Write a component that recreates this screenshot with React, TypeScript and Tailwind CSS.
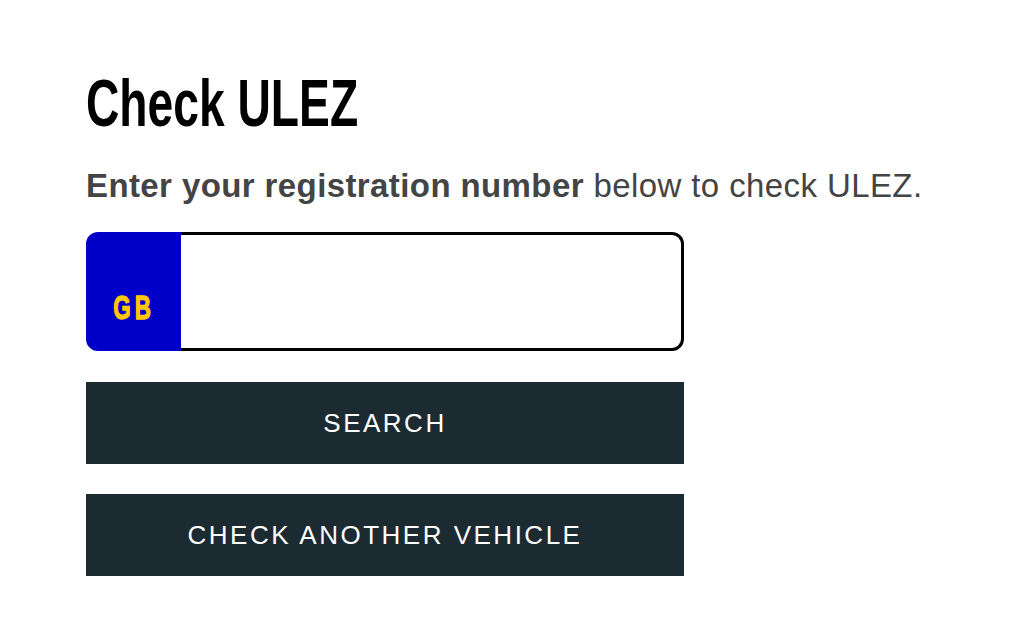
import React from "react";

export default function App() {
  return (
    <div className="w-[1010px] h-[638px] bg-white pl-[86px] pt-[70px]" style={{ fontFamily: '"Liberation Sans", Arial, sans-serif' }}>
      <h1 className="text-[66px] leading-[66px] font-bold text-black origin-left [transform:scaleX(0.70)] inline-block">
        Check ULEZ
      </h1>
      <p className="mt-[33px] text-[33px] leading-[34px] tracking-[0.4px] text-[#444444]">
        <span className="font-bold">Enter your registration number</span> below to check ULEZ.
      </p>
      <div className="mt-[29px] w-[598px] h-[119px] flex">
        <div className="w-[95px] bg-[#0000c8] rounded-l-[12px] flex items-end justify-center pb-[27px]">
          <span className="text-[#ffc800] font-bold text-[34px] leading-none tracking-[6px] [transform:scaleX(0.66)] [-webkit-text-stroke:1.3px_#ffc800] inline-block pl-[2px]">GB</span>
        </div>
        <div className="flex-1 flex border-[3px] border-l-0 border-black rounded-r-[12px] bg-white">
          <input className="flex-1 outline-none bg-transparent" aria-label="registration" />
        </div>
      </div>
      <button className="mt-[31px] w-[598px] h-[82px] bg-[#1c2a32] text-white text-[26px] tracking-[2.5px] flex items-center justify-center">
        SEARCH
      </button>
      <button className="mt-[30px] w-[598px] h-[82px] bg-[#1c2a32] text-white text-[26px] tracking-[2.5px] flex items-center justify-center">
        CHECK ANOTHER VEHICLE
      </button>
    </div>
  );
}
